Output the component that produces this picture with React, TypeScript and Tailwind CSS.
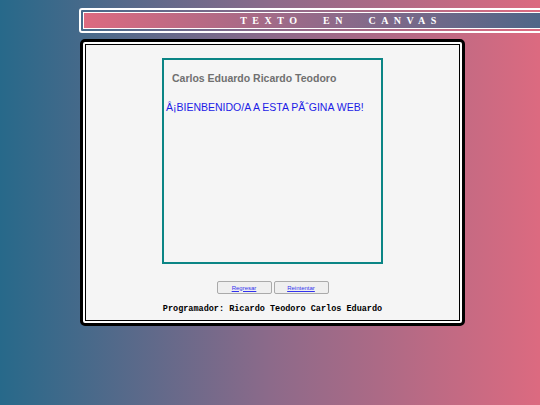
export default function App() {
  return (
    <div className="h-[405px] w-full overflow-hidden bg-[linear-gradient(to_right,#27698a,#8c6a8a,#dc6a80)]">
      <div className="ml-[79px] mt-[8px] w-[524px] rounded-[3px] border-2 border-white p-[2px]">
        <div className="flex h-[17px] items-center justify-center border border-white bg-[linear-gradient(to_right,#dc6a80,#8c6a8a,#3e6587)]">
          <span
            className="text-[10px] font-bold leading-none text-white"
            style={{ fontFamily: '"Liberation Serif", serif', letterSpacing: "5.5px", wordSpacing: "12.5px" }}
          >
            TEXTO EN CANVAS
          </span>
        </div>
      </div>

      <div className="ml-[80px] mt-[6px] w-[385px] rounded-[5px] border-[3px] border-black bg-white p-[2px]">
        <div className="flex h-[277px] flex-col items-center border border-black bg-[#f5f5f5] pt-[13px]">
          <div className="h-[206px] w-[221px] border-2 border-[#0b8585]" style={{ fontFamily: '"Liberation Sans", Arial, sans-serif' }}>
            <div className="pl-[8px] pt-[12px] text-[10.5px] font-bold leading-[12px] text-[#707070]">
              Carlos Eduardo Ricardo Teodoro
            </div>
            <div className="mt-[17px] pl-[2px] text-[10.5px] leading-[12px] text-[#1c1ce6]">
              Â¡BIENBENIDO/A A ESTA PÃˆGINA WEB!
            </div>
          </div>

          <div className="mt-[17px] flex gap-[2px]" style={{ fontFamily: '"Liberation Sans", Arial, sans-serif' }}>
            <button className="flex h-[13px] w-[55px] items-center justify-center rounded-[2px] border border-[#aaaaaa] bg-[#efefef] text-[6px] leading-none text-[#3333ee] underline">
              Regresar
            </button>
            <button className="flex h-[13px] w-[55px] items-center justify-center rounded-[2px] border border-[#aaaaaa] bg-[#efefef] text-[6px] leading-none text-[#3333ee] underline">
              Reintentar
            </button>
          </div>

          <div
            className="mt-[10px] text-[8.5px] font-bold leading-[10px] text-black"
            style={{ fontFamily: '"Liberation Mono", "Courier New", monospace' }}
          >
            Programador: Ricardo Teodoro Carlos Eduardo
          </div>
        </div>
      </div>
    </div>
  );
}
